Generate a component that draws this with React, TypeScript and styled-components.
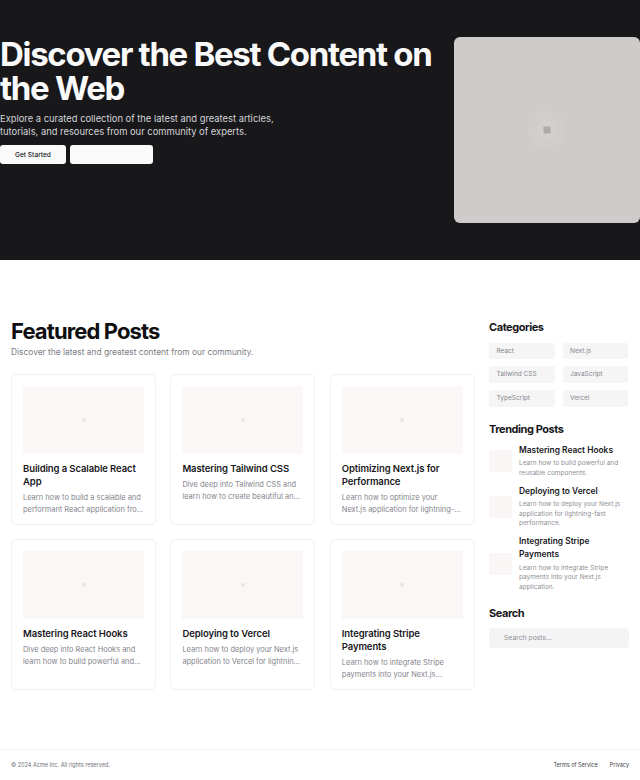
import React from "react";
import styled, { createGlobalStyle } from "styled-components";

const GlobalStyle = createGlobalStyle`
  * {
    box-sizing: border-box;
  }
  body {
    margin: 0;
    background: #ffffff;
    font-family: Inter, "Liberation Sans", sans-serif;
    color: #18181b;
  }
`;

const Hero = styled.section`
  height: 260px;
  padding-top: 37px;
  background: #18181b;
  display: flex;
  align-items: flex-start;
  justify-content: space-between;
`;

const HeroText = styled.div`
  width: 445px;
`;

const HeroTitle = styled.h1`
  margin: 0;
  font-size: 33px;
  line-height: 34px;
  font-weight: 700;
  letter-spacing: -1.32px;
  color: #fafafa;
`;

const HeroLead = styled.p`
  margin: 6.5px 0 0;
  width: 290px;
  font-size: 9.37px;
  line-height: 13px;
  color: #d4d4d8;
`;

const HeroActions = styled.div`
  display: flex;
  gap: 4px;
  margin-top: 7.5px;
`;

const HeroButton = styled.button<{ $wide?: boolean }>`
  width: ${(p) => (p.$wide ? "83px" : "66px")};
  height: 19px;
  padding: 0;
  border: 0;
  border-radius: 3px;
  background: #fafafa;
  color: #18181b;
  font: 500 6.6px Inter, sans-serif;
`;

const HeroImage = styled.div`
  width: 186px;
  height: 186px;
  border-radius: 6px;
  background: #cfcbcb;
  display: flex;
  align-items: center;
  justify-content: center;
`;

const Main = styled.main`
  display: grid;
  grid-template-columns: 464px 140px;
  column-gap: 14px;
  padding: 60px 11px 0;
  height: 489px;
`;

const SectionTitle = styled.h2`
  margin: 0;
  font-size: 22px;
  line-height: 22px;
  font-weight: 700;
  letter-spacing: -0.88px;
  color: #0f0f11;
`;

const SectionLead = styled.p`
  margin: 3px 0 0;
  font-size: 8.4px;
  line-height: 14px;
  color: #7c7c85;
`;

const PostGrid = styled.div`
  display: grid;
  grid-template-columns: repeat(3, 145px);
  grid-auto-rows: 151px;
  column-gap: 14.4px;
  row-gap: 14px;
  margin-top: 15px;
`;

const PostCard = styled.article`
  border: 1px solid #f0f0f0;
  border-radius: 5px;
  padding: 11px;
  background: #fff;
`;

const Thumb = styled.div`
  height: 68px;
  background: #fbf7f7;
  display: flex;
  align-items: center;
  justify-content: center;
`;

const PostTitle = styled.h3`
  margin: 8px 0 0;
  font-size: 9.5px;
  line-height: 13px;
  font-weight: 600;
  letter-spacing: -0.1px;
  color: #18181b;
`;

const PostExcerpt = styled.p`
  margin: 4px 0 0;
  font-size: 7.45px;
  line-height: 12px;
  color: #85858d;
  display: -webkit-box;
  -webkit-line-clamp: 2;
  -webkit-box-orient: vertical;
  overflow: hidden;
`;

const Sidebar = styled.aside`
  display: flex;
  flex-direction: column;
`;

const SideTitle = styled.h2`
  margin: 0;
  font-size: 11px;
  line-height: 14px;
  font-weight: 700;
  letter-spacing: -0.44px;
  color: #18181b;
`;

const CategoryGrid = styled.div`
  display: grid;
  grid-template-columns: 65.5px 65.5px;
  column-gap: 8px;
  row-gap: 7.3px;
  margin-top: 8.5px;
  margin-bottom: 15.5px;
`;

const Category = styled.div`
  height: 16.5px;
  padding-left: 7.5px;
  border-radius: 2px;
  background: #f5f5f6;
  font-size: 6.5px;
  line-height: 16.5px;
  color: #85858d;
`;

const TrendingList = styled.div`
  display: flex;
  flex-direction: column;
  gap: 6.5px;
  margin-top: 7.5px;
  margin-bottom: 14px;
`;

const TrendingItem = styled.div`
  display: flex;
  align-items: center;
  gap: 7px;
`;

const TrendingThumb = styled.div`
  flex: none;
  width: 23px;
  height: 22px;
  background: #fbf6f6;
`;

const TrendingTitle = styled.h3`
  margin: 0;
  font-size: 8.4px;
  line-height: 13px;
  font-weight: 600;
  color: #18181b;
`;

const TrendingText = styled.p`
  margin: 2.5px 0 0;
  font-size: 6.5px;
  line-height: 9.5px;
  color: #8f8f96;
`;

const SearchField = styled.div`
  height: 19.5px;
  margin-top: 8px;
  padding-left: 15px;
  border-radius: 4px;
  background: #f4f4f5;
  font-size: 6.8px;
  line-height: 19.5px;
  color: #8f8f96;
`;

const Footer = styled.footer`
  height: 31px;
  border-top: 1px solid #f2f2f3;
  padding: 0 11px;
  display: flex;
  align-items: center;
  justify-content: space-between;
`;

const Copyright = styled.span`
  font-size: 5.55px;
  color: #71717a;
`;

const FooterLinks = styled.nav`
  display: flex;
  gap: 12px;
`;

const FooterLink = styled.a`
  font-size: 5.5px;
  color: #3f3f46;
`;

const Placeholder = ({ size, tone }: { size: number; tone: string }) => (
  <svg width={size} height={size} viewBox="0 0 24 24" fill="none">
    <circle cx="12" cy="12" r="11" fill="#ffffff" opacity="0.04" />
    <circle cx="12" cy="12" r="6" fill="#ffffff" opacity="0.05" />
    <rect x="10" y="10" width="4" height="4" fill={tone} />
  </svg>
);

const posts = [
  {
    title: "Building a Scalable React App",
    text: "Learn how to build a scalable and performant React application from scratch.",
  },
  {
    title: "Mastering Tailwind CSS",
    text: "Dive deep into Tailwind CSS and learn how to create beautiful and responsive designs.",
  },
  {
    title: "Optimizing Next.js for Performance",
    text: "Learn how to optimize your Next.js application for lightning-fast performance.",
  },
  {
    title: "Mastering React Hooks",
    text: "Dive deep into React Hooks and learn how to build powerful and reusable components.",
  },
  {
    title: "Deploying to Vercel",
    text: "Learn how to deploy your Next.js application to Vercel for lightning-fast performance.",
  },
  {
    title: "Integrating Stripe Payments",
    text: "Learn how to integrate Stripe payments into your Next.js application with ease.",
  },
];

const categories = ["React", "Next.js", "Tailwind CSS", "JavaScript", "TypeScript", "Vercel"];

const trending = [
  {
    title: "Mastering React Hooks",
    text: "Learn how to build powerful and reusable components.",
  },
  {
    title: "Deploying to Vercel",
    text: "Learn how to deploy your Next.js application for lightning-fast performance.",
  },
  {
    title: "Integrating Stripe Payments",
    text: "Learn how to integrate Stripe payments into your Next.js application.",
  },
];

const App = () => (
  <>
    <GlobalStyle />
    <Hero>
      <HeroText>
        <HeroTitle>Discover the Best Content on the Web</HeroTitle>
        <HeroLead>
          Explore a curated collection of the latest and greatest articles, tutorials, and
          resources from our community of experts.
        </HeroLead>
        <HeroActions>
          <HeroButton>Get Started</HeroButton>
          <HeroButton $wide />
        </HeroActions>
      </HeroText>
      <HeroImage>
        <Placeholder size={42} tone="#aeabab" />
      </HeroImage>
    </Hero>
    <Main>
      <div>
        <SectionTitle>Featured Posts</SectionTitle>
        <SectionLead>Discover the latest and greatest content from our community.</SectionLead>
        <PostGrid>
          {posts.map((post) => (
            <PostCard key={post.title}>
              <Thumb>
                <Placeholder size={20} tone="#e8e3e3" />
              </Thumb>
              <PostTitle>{post.title}</PostTitle>
              <PostExcerpt>{post.text}</PostExcerpt>
            </PostCard>
          ))}
        </PostGrid>
      </div>
      <Sidebar>
        <SideTitle>Categories</SideTitle>
        <CategoryGrid>
          {categories.map((name) => (
            <Category key={name}>{name}</Category>
          ))}
        </CategoryGrid>
        <SideTitle>Trending Posts</SideTitle>
        <TrendingList>
          {trending.map((item) => (
            <TrendingItem key={item.title}>
              <TrendingThumb />
              <div>
                <TrendingTitle>{item.title}</TrendingTitle>
                <TrendingText>{item.text}</TrendingText>
              </div>
            </TrendingItem>
          ))}
        </TrendingList>
        <SideTitle>Search</SideTitle>
        <SearchField>Search posts...</SearchField>
      </Sidebar>
    </Main>
    <Footer>
      <Copyright>© 2024 Acme Inc. All rights reserved.</Copyright>
      <FooterLinks>
        <FooterLink>Terms of Service</FooterLink>
        <FooterLink>Privacy</FooterLink>
      </FooterLinks>
    </Footer>
  </>
);

export default App;
